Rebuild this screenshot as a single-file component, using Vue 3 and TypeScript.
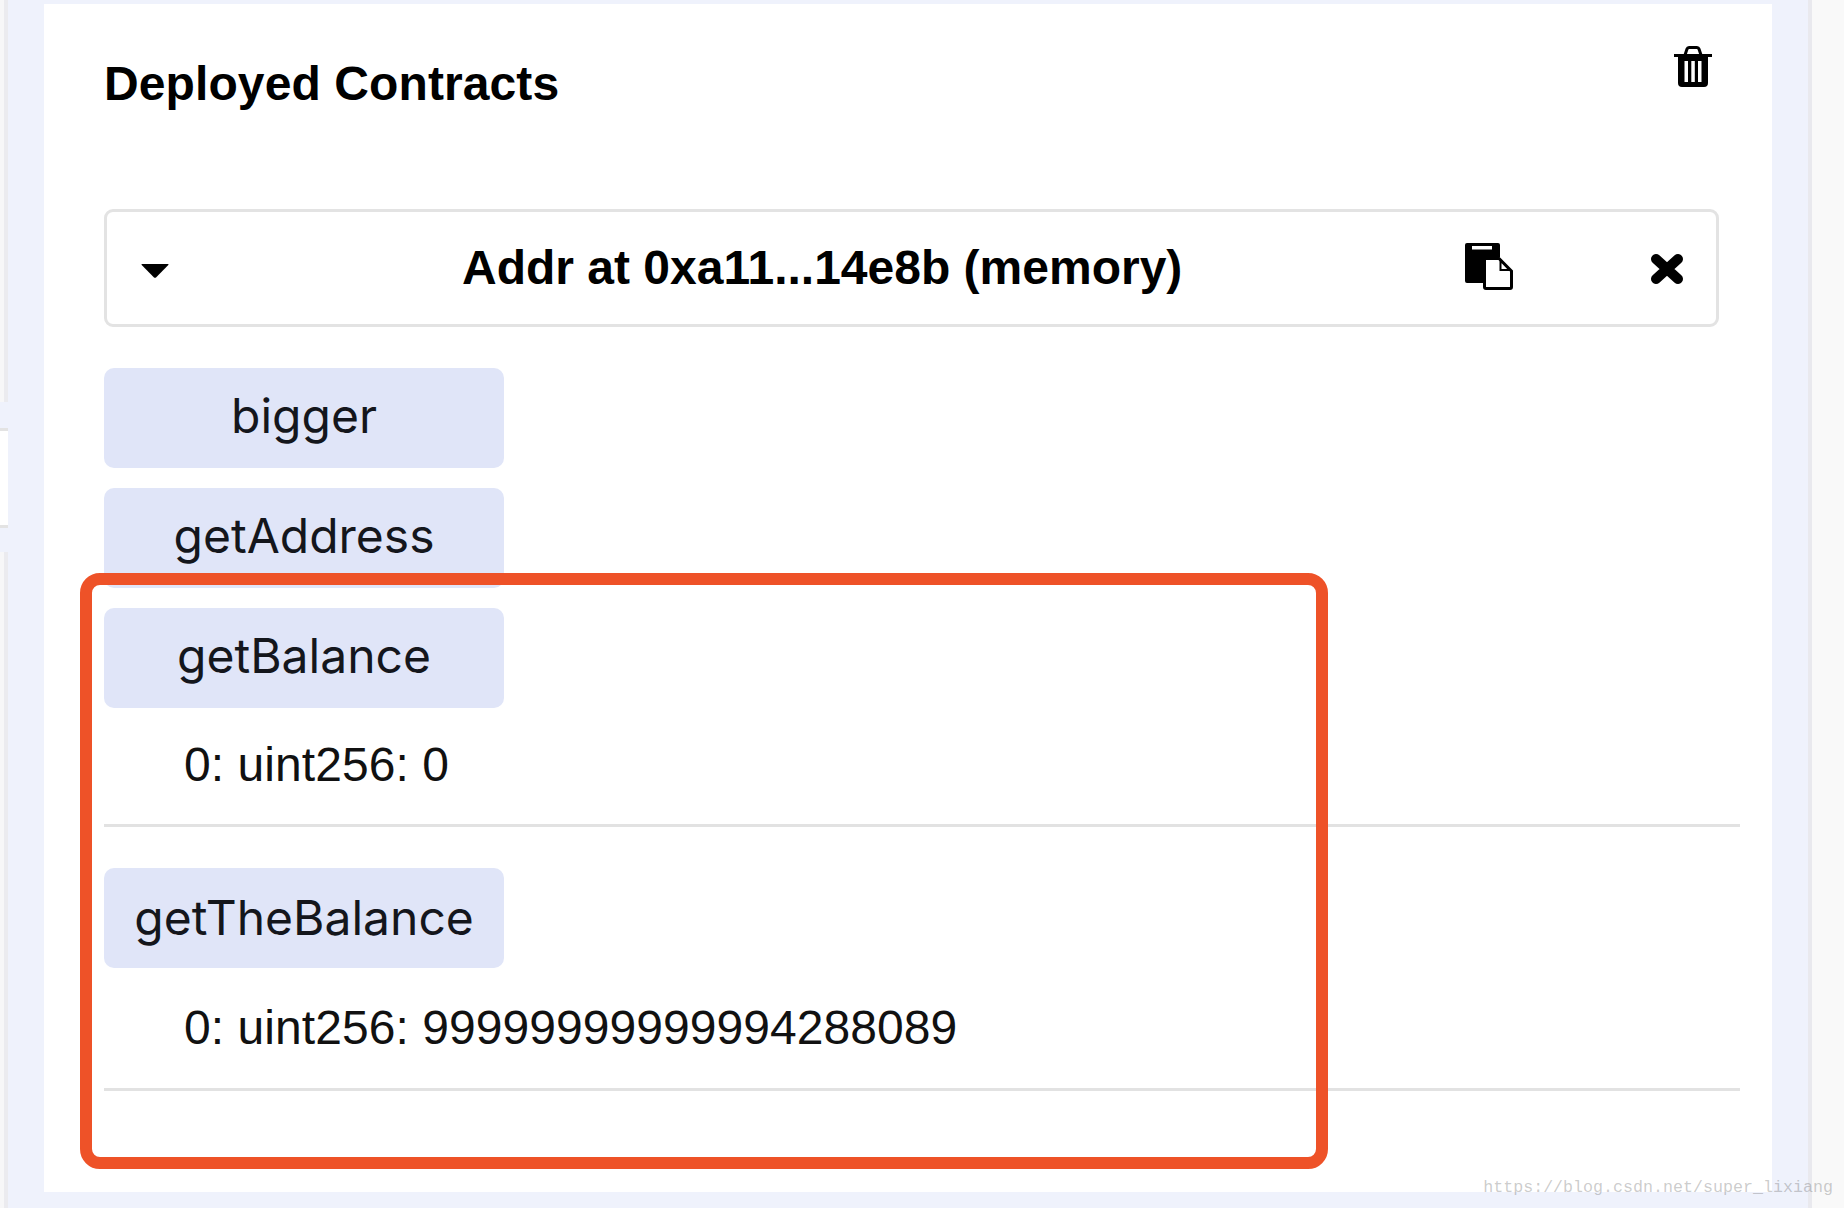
<script setup lang="ts">
interface Fn { name: string; result?: string; }
const fns: Fn[] = [
  { name: 'bigger' },
  { name: 'getAddress' },
  { name: 'getBalance', result: '0: uint256: 0' },
  { name: 'getTheBalance', result: '0: uint256: 99999999999994288089' },
];
</script>

<template>
  <div class="screen">
    <aside class="rail-left">
      <div class="rail-seg rail-seg-top"></div>
      <div class="rail-gap"></div>
      <div class="rail-tab"></div>
      <div class="rail-gap rail-gap-b"></div>
      <div class="rail-seg rail-seg-bottom"></div>
    </aside>

    <main class="panel">
      <header class="head">
        <h2 class="title">Deployed Contracts</h2>
        <svg class="trash" viewBox="0 0 38 41" aria-hidden="true">
          <path d="M11 9 L13 3 Q13.500 1.500 15 1.500 H23 Q24.500 1.500 25 3 L27 9" fill="none" stroke="#000" stroke-width="3" />
          <rect x="0" y="8" width="38" height="3" fill="#000" />
          <path fill-rule="evenodd" fill="#000" d="M4 10 H34 V37 Q34 41 30 41 H8 Q4 41 4 37 Z M10.500 15 V36 H14 V15 Z M17.300 15 V36 H20.800 V15 Z M24 15 V36 H27.500 V15 Z" />
        </svg>
      </header>

      <section class="instance">
        <svg class="caret" viewBox="0 0 28 14" aria-hidden="true">
          <path d="M1 0 H27 Q28 0 27.300 1 L15 13.500 Q14 14 13 13.500 L0.700 1 Q0 0 1 0 Z" fill="#000" />
        </svg>
        <span class="addr">Addr at 0xa11...14e8b (memory)</span>
        <svg class="copy" viewBox="0 0 49 47" aria-hidden="true">
          <path fill-rule="evenodd" fill="#000" d="M2 0 H33 Q35 0 35 2 V14 H18 V40 H2 Q0 40 0 38 V2 Q0 0 2 0 Z M7 3 V6.500 H27 V3 Z" />
          <path d="M19.500 15.500 H34 L46.500 28 V44 Q46.500 45.500 45 45.500 H21 Q19.500 45.500 19.500 44 Z" fill="#fff" stroke="#000" stroke-width="3" />
          <path d="M35.500 17.500 L44.500 27 H35.500 Z" fill="#fff" stroke="#000" stroke-width="2" />
        </svg>
        <svg class="close" viewBox="0 0 34 32" aria-hidden="true">
          <path d="M6 6 L28 26 M28 6 L6 26" stroke="#000" stroke-width="10" stroke-linecap="round" fill="none" />
        </svg>
      </section>

      <div class="fn-list">
        <div v-for="fn in fns" :key="fn.name" class="fn" :class="{ 'has-result': fn.result }">
          <button class="fn-btn" type="button">{{ fn.name }}</button>
          <template v-if="fn.result">
            <div class="fn-result">{{ fn.result }}</div>
            <div class="fn-rule"></div>
          </template>
        </div>
      </div>

      <div class="highlight"></div>
    </main>

    <div class="gutter"></div>
    <aside class="rail-right"></aside>

    <span class="watermark">https://blog.csdn.net/super_lixiang</span>
  </div>
</template>

<style>
html, body { margin: 0; background: #eff2fc; }
</style>

<style scoped>
.screen {
  position: relative;
  display: flex;
  width: 1844px;
  height: 1208px;
  overflow: hidden;
  background: #eff2fc;
  font-family: "Liberation Sans", Arial, sans-serif;
  color: #000;
}

.rail-left {
  flex: 0 0 44px;
  display: flex;
  flex-direction: column;
}
.rail-seg {
  width: 4px;
  background: #f7f7f8;
  border-right: 4px solid #ebebef;
}
.rail-seg-top { height: 402px; }
.rail-seg-bottom { flex: 1; }
.rail-gap { height: 26px; }
.rail-gap-b { height: 24px; }
.rail-tab {
  width: 8px;
  height: 94px;
  background: #fff;
  border-top: 3px solid #e3e3e3;
  border-bottom: 3px solid #e3e3e3;
}

.panel {
  position: relative;
  flex: 0 0 1728px;
  box-sizing: border-box;
  height: 1188px;
  margin-top: 4px;
  padding: 0 53px 0 60px;
  background: #fff;
}

.head {
  display: flex;
  justify-content: space-between;
  align-items: flex-start;
  height: 205px;
}
.title {
  margin: 52px 0 0 0;
  font-size: 48px;
  line-height: 56px;
  font-weight: 700;
  letter-spacing: 0.1px;
}
.trash {
  width: 38px;
  height: 41px;
  margin: 42px 7px 0 0;
}

.instance {
  display: flex;
  align-items: center;
  box-sizing: border-box;
  height: 118px;
  margin-left: 0;
  border: 3px solid #e3e3e3;
  border-radius: 9px;
}
.caret {
  flex: none;
  width: 28px;
  height: 14px;
  margin: 5px 0 0 34px;
}
.addr {
  flex: none;
  width: 721px;
  margin-left: 293px;
  font-size: 48px;
  line-height: 56px;
  font-weight: 700;
  white-space: nowrap;
}
.copy {
  flex: none;
  width: 49px;
  height: 47px;
  margin: -3px 0 0 282px;
}
.close {
  flex: none;
  width: 34px;
  height: 32px;
  margin: 2px 0 0 136px;
}

.fn-list {
  display: flex;
  flex-direction: column;
  gap: 20px;
  margin-top: 41px;
  margin-right: -21px;
}
.fn.has-result + .fn.has-result {
  margin-top: 21px;
}
.fn-btn {
  display: block;
  width: 400px;
  height: 100px;
  padding: 0 0 6px;
  border: 0;
  border-radius: 10px;
  background: #e0e5f8;
  color: #14161c;
  font-family: Inter, "Liberation Sans", Arial, sans-serif;
  font-size: 48px;
  text-align: center;
}
.fn:last-child .fn-btn {
  padding-bottom: 1px;
}
.fn-result {
  height: 116px;
  box-sizing: border-box;
  padding: 25px 0 0 80px;
  font-size: 48px;
  line-height: 64px;
  letter-spacing: 0.06px;
  color: #111;
}
.fn:last-child .fn-result {
  height: 120px;
  padding-top: 28px;
}
.fn-rule {
  height: 3px;
  background: #e2e2e2;
}

.highlight {
  position: absolute;
  left: 36px;
  top: 569px;
  box-sizing: border-box;
  width: 1248px;
  height: 596px;
  border: 12px solid #ee5228;
  border-radius: 20px;
}

.gutter {
  flex: 0 0 36px;
}
.rail-right {
  flex: 1;
  background: #f9f9f9;
  border-left: 4px solid #e9e9ee;
}

.watermark {
  position: absolute;
  right: 11px;
  top: 1177px;
  font-family: "Liberation Mono", monospace;
  font-size: 16.670px;
  line-height: 22px;
  color: rgba(110, 110, 110, 0.36);
  white-space: nowrap;
}
</style>
